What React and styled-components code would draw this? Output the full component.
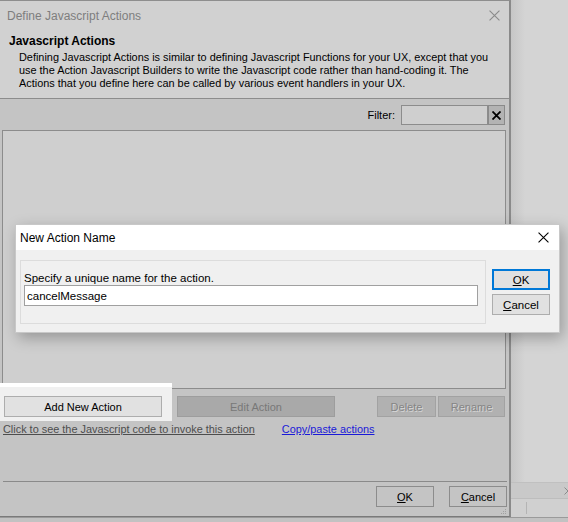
import React from "react";
import styled, { createGlobalStyle } from "styled-components";

const Global = createGlobalStyle`
  html, body { margin: 0; padding: 0; }
  body { background: #d4d4d4; width: 568px; height: 522px; overflow: hidden; }
  * { box-sizing: border-box; }
`;

const Page = styled.div`
  position: relative;
  width: 568px;
  height: 522px;
  display: flex;
  flex-direction: column;
  font-family: "Liberation Sans", Arial, sans-serif;
`;

const Main = styled.div`
  display: flex;
  height: 517px;
`;

const Dialog = styled.div`
  width: 511px;
  height: 517px;
  display: flex;
  flex-direction: column;
  background: #c4c4c4;
  border-top: 1px solid #8e8e8e;
  border-right: 2px solid #8a8a8a;
  border-bottom: 1px solid #7a7a7a;
  position: relative;
`;

const Header = styled.div`
  background: #d1d1d1;
  height: 98px;
  border-bottom: 1px solid #8c8c8c;
  display: flex;
  flex-direction: column;
`;

const TitleBar = styled.div`
  height: 30px;
  display: flex;
  align-items: center;
  justify-content: space-between;
  padding: 0 9px 1px 7px;
  font-size: 12px;
  color: #7e7e7e;
`;

const Heading = styled.div`
  font-weight: bold;
  font-size: 12px;
  color: #000;
  padding-left: 9px;
  margin-top: 3px;
  line-height: 14px;
`;

const Description = styled.p`
  margin: 3px 0 0;
  padding: 0 0 0 19px;
  font-size: 10.9px;
  line-height: 13px;
  color: #000;
  white-space: nowrap;
`;

const FilterRow = styled.div`
  display: flex;
  justify-content: flex-end;
  align-items: center;
  height: 31px;
  padding: 1px 4px 0 0;
  font-size: 11px;
  color: #000;
`;

const FilterLabel = styled.span`
  margin-right: 6px;
`;

const FilterInput = styled.div`
  width: 87px;
  height: 20px;
  border: 1px solid #8c8c8c;
  background: #cfcfcf;
`;

const ClearButton = styled.div`
  width: 17px;
  height: 20px;
  background: #b3b3b3;
  border: 1px solid #8a8a8a;
  display: flex;
  align-items: center;
  justify-content: center;
`;

const ListBox = styled.div`
  margin: 0 3px 0 2px;
  height: 259px;
  background: #cfcfcf;
  border: 1px solid #8c8c8c;
`;

const ButtonRow = styled.div`
  display: flex;
  align-items: flex-start;
  height: 32px;
`;

const Highlight = styled.div`
  width: 172px;
  margin-top: -6px;
  padding: 9px 10px 4px 4px;
  background: #f0f0f0;
  border-top: 4px solid #ffffff;
`;

const Button = styled.div`
  height: 21px;
  width: ${(p) => p.$w}px;
  margin-left: ${(p) => p.$ml || 0}px;
  margin-top: ${(p) => p.$mt || 0}px;
  display: flex;
  align-items: center;
  justify-content: center;
  font-size: 11px;
  background: ${(p) => p.$bg || "#e1e1e1"};
  border: 1px solid ${(p) => p.$bd || "#adadad"};
  color: ${(p) => p.$fg || "#000"};
  text-shadow: ${(p) => (p.$emboss ? "1px 1px 0 #d6d6d6" : "none")};
`;

const LinkRow = styled.div`
  display: flex;
  font-size: 10.9px;
  line-height: 14px;
  padding-left: 3px;
  margin-top: 1px;
`;

const Link = styled.span`
  text-decoration: underline;
  color: ${(p) => p.$c};
  margin-right: ${(p) => p.$mr || 0}px;
`;

const Spacer = styled.div`
  flex: 1;
`;

const Footer = styled.div`
  margin: 0 2px 0 3px;
  border-top: 1px solid #8a8a8a;
  height: 35px;
  display: flex;
  justify-content: flex-end;
  padding-top: 4px;
  gap: 15px;
  position: relative;
`;

const U = styled.span`
  text-decoration: underline;
`;

const Grip = styled.svg`
  position: absolute;
  right: 0;
  bottom: 1px;
`;

const Outside = styled.div`
  flex: 1;
  display: flex;
  flex-direction: column;
  background: linear-gradient(to right, #c6c6c6 0px, #d4d4d4 14px);
`;

const OutsideBand = styled.div`
  margin-top: auto;
  height: 16px;
  background: #c9c9c9;
  border-top: 1px solid #c0c0c0;
  display: flex;
  justify-content: flex-end;
  align-items: center;
`;

const OutsideStrip = styled.div`
  height: 19px;
  background: #d0d0d0;
  border-top: 1px solid #bdbdbd;
  display: flex;
`;

const StripDivider = styled.div`
  width: 16px;
  border-right: 1px solid #b4b4b4;
  margin: 3px 0;
`;

const Bottom = styled.div`
  flex: 1;
  background: #c2c2c2;
  border-top: 1px solid #9a9a9a;
`;

/* Modal */
const Modal = styled.div`
  position: absolute;
  left: 15px;
  top: 224px;
  width: 545px;
  height: 109px;
  background: #f0f0f0;
  border: 1px solid #c8c8c8;
  box-shadow: 3px 5px 14px rgba(0, 0, 0, 0.28);
  display: flex;
  flex-direction: column;
  font-family: "Liberation Sans", Arial, sans-serif;
`;

const ModalTitle = styled.div`
  height: 25px;
  background: #ffffff;
  display: flex;
  align-items: center;
  justify-content: space-between;
  padding: 0 10px 0 4px;
  font-size: 12px;
  color: #000;
`;

const ModalBody = styled.div`
  display: flex;
  padding: 10px 0 0 4px;
  gap: 6px;
`;

const GroupBox = styled.div`
  width: 466px;
  height: 64px;
  border: 1px solid #dcdcdc;
  padding: 10px 0 0 3px;
`;

const GroupLabel = styled.div`
  font-size: 11.5px;
  line-height: 14px;
  color: #000;
`;

const TextInput = styled.div`
  width: 454px;
  height: 21px;
  background: #fff;
  border: 1px solid #a0a0a0;
  font-size: 11.5px;
  display: flex;
  align-items: center;
  padding-left: 2px;
  color: #000;
`;

const ModalButtons = styled.div`
  display: flex;
  flex-direction: column;
  gap: 4px;
  padding-top: 9px;
`;

const ModalButton = styled.div`
  width: 58px;
  height: 21px;
  background: #e1e1e1;
  border: ${(p) => (p.$default ? "2px solid #0078d7" : "1px solid #adadad")};
  font-size: 11.5px;
  display: flex;
  align-items: center;
  justify-content: center;
  color: #000;
`;

const X = ({ size = 10, color = "#000", w = 1 }) => (
  <svg width={size} height={size} viewBox="0 0 10 10">
    <path d="M0.5 0.5 L9.5 9.5 M9.5 0.5 L0.5 9.5" stroke={color} strokeWidth={w} fill="none" />
  </svg>
);

export default function App() {
  return (
    <Page>
      <Global />
      <Main>
        <Dialog>
          <Header>
            <TitleBar>
              <span>Define Javascript Actions</span>
              <X size={11} color="#8a8a8a" />
            </TitleBar>
            <Heading>Javascript Actions</Heading>
            <Description>
              Defining Javascript Actions is similar to defining Javascript Functions for your UX, except that you
              <br />
              use the Action Javascript Builders to write the Javascript code rather than hand-coding it. The
              <br />
              Actions that you define here can be called by various event handlers in your UX.
            </Description>
          </Header>
          <FilterRow>
            <FilterLabel>Filter:</FilterLabel>
            <FilterInput />
            <ClearButton>
              <X size={9} color="#000" w={2} />
            </ClearButton>
          </FilterRow>
          <ListBox />
          <ButtonRow>
            <Highlight>
              <Button $w={158}>Add New Action</Button>
            </Highlight>
            <Button $w={158} $ml={5} $mt={7} $bg="#a9a9a9" $bd="#9d9d9d" $fg="#787878">
              Edit Action
            </Button>
            <Button $w={59} $ml={42} $mt={7} $bg="#b1b1b1" $bd="#a2a2a2" $fg="#858585" $emboss>
              Delete
            </Button>
            <Button $w={67} $ml={2} $mt={7} $bg="#b1b1b1" $bd="#a2a2a2" $fg="#858585" $emboss>
              Rename
            </Button>
          </ButtonRow>
          <LinkRow>
            <Link $c="#4d4d4d" $mr={27}>Click to see the Javascript code to invoke this action</Link>
            <Link $c="#1a1ad8">Copy/paste actions</Link>
          </LinkRow>
          <Spacer />
          <Footer>
            <Button $w={58} $bg="#c4c4c4" $bd="#8c8c8c">
              <U>O</U>K
            </Button>
            <Button $w={58} $bg="#c4c4c4" $bd="#8c8c8c">
              <U>C</U>ancel
            </Button>
            <Grip width="6" height="6" viewBox="0 0 6 6">
              <rect x="4" y="0" width="1" height="1" fill="#a0a0a0" />
              <rect x="2" y="2" width="1" height="1" fill="#a0a0a0" />
              <rect x="4" y="2" width="1" height="1" fill="#a0a0a0" />
              <rect x="0" y="4" width="1" height="1" fill="#a0a0a0" />
              <rect x="2" y="4" width="1" height="1" fill="#a0a0a0" />
              <rect x="4" y="4" width="1" height="1" fill="#a0a0a0" />
            </Grip>
          </Footer>
        </Dialog>
        <Outside>
          <OutsideBand>
            <svg width="4" height="8" viewBox="0 0 4 8">
              <path d="M0.5 0.5 L4 4 M0.5 7.5 L4 4" stroke="#8a8a8a" strokeWidth="1" fill="none" />
            </svg>
          </OutsideBand>
          <OutsideStrip>
            <StripDivider />
          </OutsideStrip>
        </Outside>
      </Main>
      <Bottom />
      <Modal>
        <ModalTitle>
          <span>New Action Name</span>
          <X size={11} color="#000" />
        </ModalTitle>
        <ModalBody>
          <GroupBox>
            <GroupLabel>Specify a unique name for the action.</GroupLabel>
            <TextInput>cancelMessage</TextInput>
          </GroupBox>
          <ModalButtons>
            <ModalButton $default>
              <U>O</U>K
            </ModalButton>
            <ModalButton>
              <U>C</U>ancel
            </ModalButton>
          </ModalButtons>
        </ModalBody>
      </Modal>
    </Page>
  );
}
